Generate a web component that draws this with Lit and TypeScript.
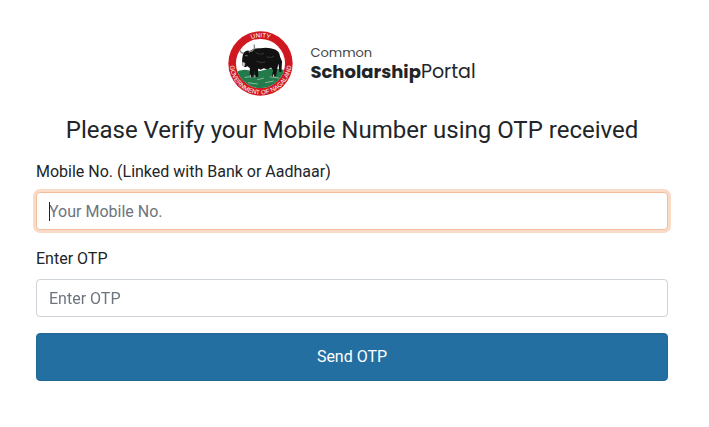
import { LitElement, html, css, svg } from "lit";
import { customElement, query } from "lit/decorators.js";

const emblem = svg`
  <defs>
    <clipPath id="field"><circle cx="98" cy="98" r="74" /></clipPath>
    <path id="top-arc" d="M19 98 A79 79 0 0 1 177 98" />
    <path id="bottom-arc" d="M5 98 A93 93 0 0 0 191 98" />
  </defs>
  <circle cx="98" cy="98" r="97" fill="#cf1820" />
  <circle cx="98" cy="98" r="74" fill="#fff" />
  <g clip-path="url(#field)">
    <path d="M20 126 Q42 113 64 119 T112 117 T176 119 V180 H20 Z" fill="#237a4b" />
    <path d="M50 140 l22 -3 M88 147 l20 -5 M126 138 l28 4 M60 156 l30 4 M112 156 l26 -5" stroke="#8ab999" stroke-width="3" />
    <path d="M46 66 Q56 55 66 60 Q80 50 98 52 Q122 48 142 56 Q156 62 157 78 L163 92 L161 124 L155 124 L152 98 L148 116 L145 136 L132 137 L136 119 L130 110 L119 116 L108 112 L98 117 L91 113 L91 138 L79 140 L80 120 L76 138 L65 139 L66 112 L59 106 L51 109 L42 101 L43 82 Z" fill="#111" />
    <path d="M46 68 Q30 60 37 46 M64 63 Q84 58 79 42" fill="none" stroke="#888" stroke-width="4" stroke-linecap="round" />
    <path d="M44 94 l7 3 l-1 8 l-6 -1 z M52 74 l7 1" fill="#ddd" stroke="#bbb" stroke-width="2" />
    <path d="M67 132 v8 M81 133 v8 M137 131 v7" stroke="#ddd" stroke-width="3" />
    <path d="M83 65 q12 8 26 3 M116 78 q12 5 23 -2 M86 91 q13 8 27 2" fill="none" stroke="#4b4b4b" stroke-width="2" />
  </g>
  <g class="emblem-text" fill="#fff" text-anchor="middle">
    <text><textPath href="#top-arc" startOffset="50%">UNITY</textPath></text>
    <text><textPath href="#bottom-arc" startOffset="50%">GOVERNMENT OF NAGALAND</textPath></text>
  </g>
`;

@customElement("app-root")
export class AppRoot extends LitElement {
  static styles = css`
    :host {
      display: block;
      background: #fff;
      color: #212529;
      font: 16px/24px Roboto, "Liberation Sans", sans-serif;
    }
    * { box-sizing: border-box; }
    main { padding: 31px 41px 46px 36px; }
    .brand {
      display: flex;
      align-items: center;
      justify-content: center;
      gap: 17px;
    }
    .emblem { width: 65px; height: 65px; flex: none; }
    .emblem-text { font: 19px "Liberation Sans", sans-serif; }
    .wordmark {
      display: flex;
      flex-direction: column;
      padding-bottom: 2px;
      font-family: Poppins, Inter, sans-serif;
      font-size: 19px;
      line-height: 20px;
    }
    .wordmark b { font-size: 18px; font-weight: 700; }
    .small { font-size: 13px; line-height: 18px; color: #444; }
    h1 {
      margin: 20px 0 14px;
      font-size: 24px;
      line-height: 29px;
      font-weight: 400;
      text-align: center;
    }
    .group { display: flex; flex-direction: column; gap: 8px; margin-bottom: 16px; }
    label { line-height: 25px; }
    .field { position: relative; display: flex; }
    input {
      width: 100%;
      height: 38px;
      padding: 6px 12px;
      border: 1px solid #ced4da;
      border-radius: 4px;
      outline: 0;
      background: #fff;
      color: #495057;
      font: inherit;
      caret-color: transparent;
    }
    input::placeholder { color: #6c757d; opacity: 1; }
    input:focus { border-color: #f1bd9b; box-shadow: 0 0 0 3px #fadbc8; }
    input:focus + .caret { display: block; }
    .caret {
      display: none;
      position: absolute;
      left: 13px;
      top: 10px;
      width: 1px;
      height: 19px;
      background: #212529;
    }
    button {
      width: 100%;
      height: 48px;
      border: 1px solid #226896;
      border-radius: 4px;
      background: #246fa2;
      color: #fff;
      font: inherit;
    }
  `;

  @query("#mobile") mobile!: HTMLInputElement;

  firstUpdated() {
    this.mobile.focus();
  }

  render() {
    return html`
      <main>
        <header class="brand">
          <svg class="emblem" viewBox="0 0 196 196" role="img" aria-label="Government of Nagaland">${emblem}</svg>
          <div class="wordmark">
            <span class="small">Common</span>
            <span><b>Scholarship</b>Portal</span>
          </div>
        </header>
        <h1>Please Verify your Mobile Number using OTP received</h1>
        <form @submit=${(e: Event) => e.preventDefault()}>
          <div class="group">
            <label for="mobile">Mobile No. (Linked with Bank or Aadhaar)</label>
            <div class="field">
              <input id="mobile" type="tel" placeholder="Your Mobile No." />
              <span class="caret"></span>
            </div>
          </div>
          <div class="group">
            <label for="otp">Enter OTP</label>
            <div class="field"><input id="otp" type="text" placeholder="Enter OTP" /></div>
          </div>
          <button type="submit">Send OTP</button>
        </form>
      </main>
    `;
  }
}
